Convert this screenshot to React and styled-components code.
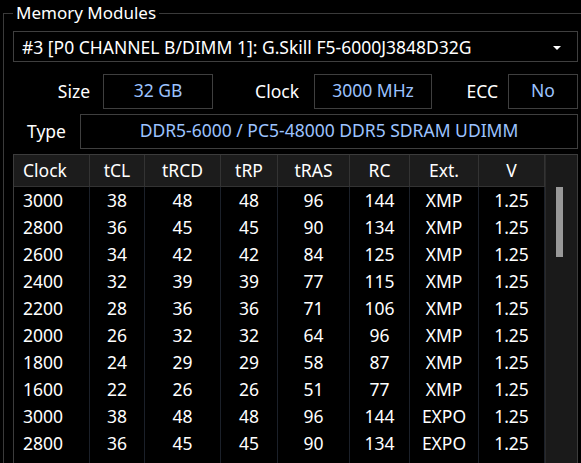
import React from "react";
import styled, { createGlobalStyle } from "styled-components";

const Global = createGlobalStyle`
	html, body {
		margin: 0;
		padding: 0;
		background: #000;
		overflow: hidden;
	}
	body {
		font-family: "Noto Sans", "Open Sans", sans-serif;
		font-size: 17.5px;
		color: #fff;
	}
`;

const COLUMNS = [
	{ key: "clock", title: "Clock", width: 76, align: "left" },
	{ key: "tcl", title: "tCL", width: 55 },
	{ key: "trcd", title: "tRCD", width: 76 },
	{ key: "trp", title: "tRP", width: 57 },
	{ key: "tras", title: "tRAS", width: 72 },
	{ key: "rc", title: "RC", width: 60 },
	{ key: "ext", title: "Ext.", width: 69 },
	{ key: "v", title: "V", width: 66 },
];

const ROWS = [
	["3000", "38", "48", "48", "96", "144", "XMP", "1.25"],
	["2800", "36", "45", "45", "90", "134", "XMP", "1.25"],
	["2600", "34", "42", "42", "84", "125", "XMP", "1.25"],
	["2400", "32", "39", "39", "77", "115", "XMP", "1.25"],
	["2200", "28", "36", "36", "71", "106", "XMP", "1.25"],
	["2000", "26", "32", "32", "64", "96", "XMP", "1.25"],
	["1800", "24", "29", "29", "58", "87", "XMP", "1.25"],
	["1600", "22", "26", "26", "51", "77", "XMP", "1.25"],
	["3000", "38", "48", "48", "96", "144", "EXPO", "1.25"],
	["2800", "36", "45", "45", "90", "134", "EXPO", "1.25"],
];

const Group = styled.fieldset`
	margin: 1px -20px 0 3px;
	padding: 0 0 0 9px;
	border: 1px solid #3a3a3a;
	height: 480px;
	min-width: 0;
`;

const Legend = styled.legend`
	padding: 0 3px;
	line-height: 24px;
	font-size: 17px;
`;

const Body = styled.div`
	width: 565px;
	display: flex;
	flex-direction: column;
	padding-top: 6px;
`;

const Select = styled.div`
	height: 29px;
	border: 1px solid #3f3f3f;
	display: flex;
	align-items: center;
	justify-content: space-between;
	padding: 0 16px 0 8px;
	white-space: nowrap;
`;

const Caret = styled.span`
	width: 0;
	height: 0;
	border-left: 4px solid transparent;
	border-right: 4px solid transparent;
	border-top: 4px solid #fff;
	margin-top: 2px;
`;

const InfoRow = styled.div`
	display: flex;
	height: 35px;
	margin-top: ${(p) => p.$top}px;
`;

const Label = styled.div`
	width: ${(p) => p.$w}px;
	display: flex;
	align-items: center;
	justify-content: ${(p) => (p.$center ? "center" : "flex-end")};
	padding-right: ${(p) => p.$pad || 0}px;
	box-sizing: border-box;
	padding-bottom: 1px;
`;

const Value = styled.div`
	flex: ${(p) => (p.$w ? "none" : 1)};
	width: ${(p) => (p.$w ? `${p.$w}px` : "auto")};
	box-sizing: border-box;
	border: 1px solid #3f3f3f;
	display: flex;
	align-items: center;
	justify-content: center;
	padding-bottom: 3px;
	color: #9cc3ff;
	white-space: nowrap;
`;

const Table = styled.div`
	margin-top: 5px;
	height: 320px;
	border: 1px solid #3c3c3c;
	display: flex;
	overflow: hidden;
`;

const Grid = styled.div`
	width: 531px;
	display: flex;
	flex-direction: column;
`;

const Row = styled.div`
	display: flex;
	height: ${(p) => (p.$head ? 32 : 27)}px;
	flex: none;
	background: ${(p) => (p.$head ? "#1c1c1c" : "#000")};
	border-bottom: ${(p) => (p.$head ? "1px solid #333" : "none")};
	box-sizing: border-box;
`;

const Cell = styled.div`
	width: ${(p) => p.$w}px;
	flex: none;
	box-sizing: border-box;
	border-right: 1px solid ${(p) => (p.$head ? "#333" : "#1b2029")};
	display: flex;
	align-items: center;
	justify-content: ${(p) => (p.$left ? "flex-start" : "center")};
	padding-left: ${(p) => (p.$left ? 9 : 0)}px;
	padding-bottom: 2px;
`;

const Filler = styled.div`
	flex: 1;
	display: flex;
`;

const Track = styled.div`
	flex: 1;
	background: #1a1a1a;
	border-left: 1px solid #2a2a2a;
	padding-top: 32px;
	display: flex;
	justify-content: center;
	padding-right: 5px;
`;

const Thumb = styled.div`
	width: 7px;
	height: 70px;
	background: #999;
`;

function InfoTable() {
	return (
		<Table>
			<Grid>
				<Row $head>
					{COLUMNS.map((c) => (
						<Cell key={c.key} $w={c.width} $head $left={c.align === "left"}>
							{c.title}
						</Cell>
					))}
				</Row>
				{ROWS.map((r, i) => (
					<Row key={i}>
						{r.map((v, j) => (
							<Cell key={j} $w={COLUMNS[j].width} $left={j === 0}>
								{v}
							</Cell>
						))}
					</Row>
				))}
				<Filler>
					{COLUMNS.map((c) => (
						<Cell key={c.key} $w={c.width} />
					))}
				</Filler>
			</Grid>
			<Track>
				<Thumb />
			</Track>
		</Table>
	);
}

export default function App() {
	return (
		<>
			<Global />
			<Group>
				<Legend>Memory Modules</Legend>
				<Body>
					<Select>
						<span>#3 [P0 CHANNEL B/DIMM 1]: G.Skill F5-6000J3848D32G</span>
						<Caret />
					</Select>
					<InfoRow $top={12}>
						<Label $w={90} $pad={13}>Size</Label>
						<Value $w={110}>32 GB</Value>
						<Label $w={101} $pad={15}>Clock</Label>
						<Value $w={118}>3000 MHz</Value>
						<Label $w={76} $pad={10}>ECC</Label>
						<Value $w={70}>No</Value>
					</InfoRow>
					<InfoRow $top={5}>
						<Label $w={67} $center>Type</Label>
						<Value>DDR5-6000 / PC5-48000 DDR5 SDRAM UDIMM</Value>
					</InfoRow>
					<InfoTable />
				</Body>
			</Group>
		</>
	);
}
